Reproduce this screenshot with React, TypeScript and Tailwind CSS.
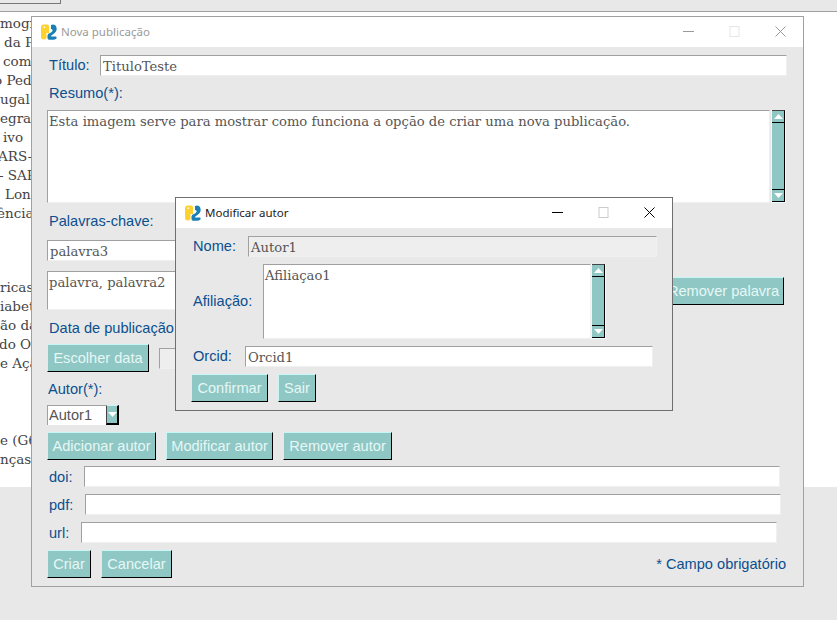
import React from "react";

const serif = "font-['DejaVu_Serif',serif]";

function Btn({ children, className = "" }: { children: React.ReactNode; className?: string }) {
  return (
    <button
      type="button"
      className={`h-[28px] shrink-0 whitespace-nowrap border-t border-l border-t-[#c6f6f6] border-l-[#c6f6f6] border-b border-r border-b-black border-r-black bg-[#8fc7c4] pt-[1px] text-center text-[14.6px] text-[#e6f7f6] ${className}`}
    >
      {children}
    </button>
  );
}

function Entry({ value, className = "" }: { value?: string; className?: string }) {
  return (
    <div
      className={`h-[21px] shrink-0 overflow-hidden whitespace-nowrap border-t border-l border-t-[#a0a0a0] border-l-[#a0a0a0] border-b border-r border-b-[#f0f0f0] border-r-[#f0f0f0] pl-[2px] text-[13.15px] leading-[21px] text-[#555] ${serif} ${className}`}
    >
      {value}
    </div>
  );
}

function TextBox({ value, className = "" }: { value?: string; className?: string }) {
  return (
    <div
      className={`shrink-0 overflow-hidden border-t border-l border-t-[#a0a0a0] border-l-[#a0a0a0] border-b border-r border-b-[#f0f0f0] border-r-[#f0f0f0] bg-white pl-[1px] text-[13.15px] leading-[22px] text-[#555] ${serif} ${className}`}
    >
      {value}
    </div>
  );
}

function Arrow({ up }: { up?: boolean }) {
  return (
    <svg width="9" height="5" viewBox="0 0 9 5" fill="#fff">
      <path d={up ? "M4.5 0 9 5H0z" : "M0 0h9L4.5 5z"} />
    </svg>
  );
}

function ScrollBar({ className = "" }: { className?: string }) {
  return (
    <div className={`flex w-[15px] shrink-0 flex-col border-l border-r border-b border-l-[#e8fbfb] border-r-[#f2fbfb] border-b-[#f2fbfb] bg-[#8fc7c4] ${className}`}>
      <div className="flex h-[13px] items-center justify-center border-t border-r border-b border-t-[#444] border-r-black border-b-black">
        <Arrow up />
      </div>
      <div className="flex-1 border-r border-r-black"></div>
      <div className="flex h-[13px] items-center justify-center border-t border-r border-b border-t-black border-r-black border-b-black">
        <Arrow />
      </div>
    </div>
  );
}

function Logo() {
  return (
    <svg width="16" height="16" viewBox="0 0 16 16" className="shrink-0">
      <path d="M0 3.5Q0 .5 3 .5H6Q8 .5 8 2.5V9H5.5V13Q5.5 15.5 3 15.5 0 15.5 0 13z" fill="#fdd22f" />
      <path d="M2.5 2.5h1.5v1.5H2.5z" fill="#fff" />
      <path d="M10 1Q12-.2 14 1 16 2.5 15.6 6 15 8.8 12.2 10.2 10.2 11 9.8 12.5H15Q16 13 15.4 14.6 14.2 15.8 12 15.8H8Q6.5 15.8 6.5 14V11.2Q7 9.6 9 9 11.2 8 11.6 6.5 12 5.5 10 5z" fill="#1b7fb5" />
    </svg>
  );
}

function WinControls({ color, maxColor }: { color: string; maxColor: string }) {
  return (
    <div className="ml-auto flex items-center gap-[35px] pb-[2px]">
      <svg width="11" height="11" viewBox="0 0 11 11" stroke={color} fill="none">
        <path d="M0 5.5h11" />
      </svg>
      <svg width="11" height="11" viewBox="0 0 11 11" stroke={maxColor} fill="none">
        <rect x="1" y=".5" width="9" height="10" />
      </svg>
      <svg width="11" height="11" viewBox="0 0 11 11" stroke={color} fill="none">
        <path d="M.5.5l10 10M10.5.5l-10 10" />
      </svg>
    </div>
  );
}

const backLines = [
  { text: "mografia e Estudo de Pedro Pedro Hochstetter", cls: "ml-0" },
  { text: "da Pediatria", cls: "ml-[4px]" },
  { text: "com", cls: "ml-[3px]" },
  { text: "o Pediatria", cls: "ml-[-6px]" },
  { text: "ugal", cls: "ml-0" },
  { text: "egrado", cls: "ml-0" },
  { text: "ivo", cls: "ml-[3px]" },
  { text: "ARS-", cls: "ml-[-2px]" },
  { text: "- SARS", cls: "ml-[-1px]" },
  { text: "Long", cls: "ml-[5px]" },
  { text: "ência", cls: "ml-[-3px]" },
];

const backLines2 = [
  { text: "ricas e", cls: "ml-0" },
  { text: "iabetes", cls: "ml-0" },
  { text: "ão da", cls: "ml-0" },
  { text: "do O", cls: "ml-[-1px]" },
  { text: "e Açã", cls: "ml-0" },
];

const backLines3 = [
  { text: "e (G6", cls: "ml-0" },
  { text: "nças", cls: "ml-0" },
];

function BackList({ lines, className = "" }: { lines: { text: string; cls: string }[]; className?: string }) {
  return (
    <div className={className}>
      {lines.map((l, i) => (
        <div key={i} className={`h-[19px] whitespace-nowrap text-[13.5px] leading-[19px] text-[#444] ${serif} ${l.cls}`}>
          {l.text}
        </div>
      ))}
    </div>
  );
}

export default function App() {
  const label = "whitespace-nowrap text-[14.6px] leading-[17px] text-[#0b4f8e]";
  return (
    <div className="relative flex h-[620px] w-[837px] flex-col overflow-hidden bg-[#e8e8e8] font-['Liberation_Sans',sans-serif]">
      <div className="h-[12px] shrink-0 border-b border-b-[#a0a0a0]">
        <div className="h-[4px] w-[61px] border-r border-b border-r-[#777] border-b-[#777]"></div>
      </div>
      <div className="h-[475px] shrink-0 overflow-hidden bg-white pt-[2px]">
        <BackList lines={backLines} />
        <BackList lines={backLines2} className="mt-[55px]" />
        <BackList lines={backLines3} className="mt-[58px]" />
      </div>

      {/* Nova publicacao */}
      <div className="absolute left-[31px] top-[16px] flex h-[571px] w-[773px] flex-col border border-[#a0a0a0] bg-[#e8e8e8]">
        <div className="flex h-[30px] shrink-0 items-center bg-white pl-[9px] pr-[17px]">
          <Logo />
          <span className="ml-[4px] font-['Noto_Sans',sans-serif] text-[11.5px] text-[#9a9a9a]">Nova publicação</span>
          <WinControls color="#9a9a9a" maxColor="#e6e6e6" />
        </div>
        <div className="flex flex-1 flex-col pl-[15px]">
          <div className="mt-[8px] flex items-center">
            <span className={`ml-[2px] w-[51px] ${label}`}>Título:</span>
            <Entry value="TituloTeste" className="w-[687px] bg-white" />
          </div>
          <span className={`ml-[2px] mt-[9px] ${label}`}>Resumo(*):</span>
          <div className="mt-[8px] flex h-[93px] shrink-0">
            <TextBox value="Esta imagem serve para mostrar como funciona a opção de criar uma nova publicação." className="w-[723px]" />
            <ScrollBar className="ml-[1px]" />
          </div>
          <span className={`ml-[2px] mt-[10px] ${label}`}>Palavras-chave:</span>
          <Entry value="palavra3" className="mt-[10px] w-[400px] bg-white" />
          <div className="mt-[10px] flex h-[39px] shrink-0">
            <TextBox value="palavra, palavra2" className="w-[553px]" />
            <Btn className="ml-[63px] mt-[6px] w-[121px]">Remover palavra</Btn>
          </div>
          <span className={`ml-[2px] mt-[10px] ${label}`}>Data de publicação:</span>
          <div className="mt-[7px] flex items-center">
            <Btn className="w-[102px]">Escolher data</Btn>
            <Entry className="ml-[10px] w-[200px] bg-[#eeeeee]" />
          </div>
          <span className={`ml-[1px] mt-[9px] ${label}`}>Autor(*):</span>
          <div className="mt-[7px] flex h-[20px] w-[72px] shrink-0">
            <div className="flex-1 border-t border-l border-t-[#a0a0a0] border-l-[#a0a0a0] bg-white pl-[1px] text-[14.6px] leading-[19px] text-[#555]">Autor1</div>
            <div className="flex w-[13px] items-center justify-center border-t border-l border-t-[#c6f6f6] border-l-[#444] border-r-2 border-b-2 border-r-black border-b-black bg-[#8fc7c4]">
              <Arrow />
            </div>
          </div>
          <div className="mt-[7px] flex gap-[10px]">
            <Btn className="w-[109px]">Adicionar autor</Btn>
            <Btn className="w-[107px]">Modificar autor</Btn>
            <Btn className="w-[109px]">Remover autor</Btn>
          </div>
          <div className="mt-[6px] flex items-center">
            <span className={`ml-[2px] w-[35px] pt-[1px] ${label}`}>doi:</span>
            <Entry className="w-[696px] bg-white" />
          </div>
          <div className="mt-[7px] flex items-center">
            <span className={`ml-[2px] w-[36px] pt-[1px] ${label}`}>pdf:</span>
            <Entry className="w-[696px] bg-white" />
          </div>
          <div className="mt-[7px] flex items-center">
            <span className={`ml-[2px] w-[32px] pt-[1px] ${label}`}>url:</span>
            <Entry className="w-[696px] bg-white" />
          </div>
          <div className="mt-[7px] flex gap-[10px]">
            <Btn className="w-[44px]">Criar</Btn>
            <Btn className="w-[71px]">Cancelar</Btn>
            <span className={`ml-auto mr-[17px] self-end pb-[5px] ${label}`}>* Campo obrigatório</span>
          </div>
        </div>
      </div>

      {/* Modificar autor */}
      <div className="absolute left-[175px] top-[197px] flex h-[214px] w-[498px] flex-col border border-[#6f6f6f] bg-[#e8e8e8]">
        <div className="flex h-[30px] shrink-0 items-center bg-white pl-[9px] pr-[17px]">
          <Logo />
          <span className="ml-[4px] font-['Noto_Sans',sans-serif] text-[11.5px] text-[#1a1a1a]">Modificar autor</span>
          <WinControls color="#000" maxColor="#cccccc" />
        </div>
        <div className="flex flex-1 flex-col pl-[15px]">
          <div className="mt-[8px] flex items-center">
            <span className={`ml-[2px] w-[55px] ${label}`}>Nome:</span>
            <Entry value="Autor1" className="w-[409px] bg-[#eeeeee]" />
          </div>
          <div className="mt-[7px] flex h-[75px] shrink-0 items-center">
            <span className={`ml-[2px] w-[70px] ${label}`}>Afiliação:</span>
            <TextBox value="Afiliaçao1" className="h-full w-[328px]" />
            <ScrollBar className="h-full" />
          </div>
          <div className="mt-[7px] flex items-center">
            <span className={`ml-[2px] w-[52px] ${label}`}>Orcid:</span>
            <Entry value="Orcid1" className="w-[408px] bg-white" />
          </div>
          <div className="mt-[7px] flex gap-[10px]">
            <Btn className="w-[77px]">Confirmar</Btn>
            <Btn className="w-[38px]">Sair</Btn>
          </div>
        </div>
      </div>
    </div>
  );
}
